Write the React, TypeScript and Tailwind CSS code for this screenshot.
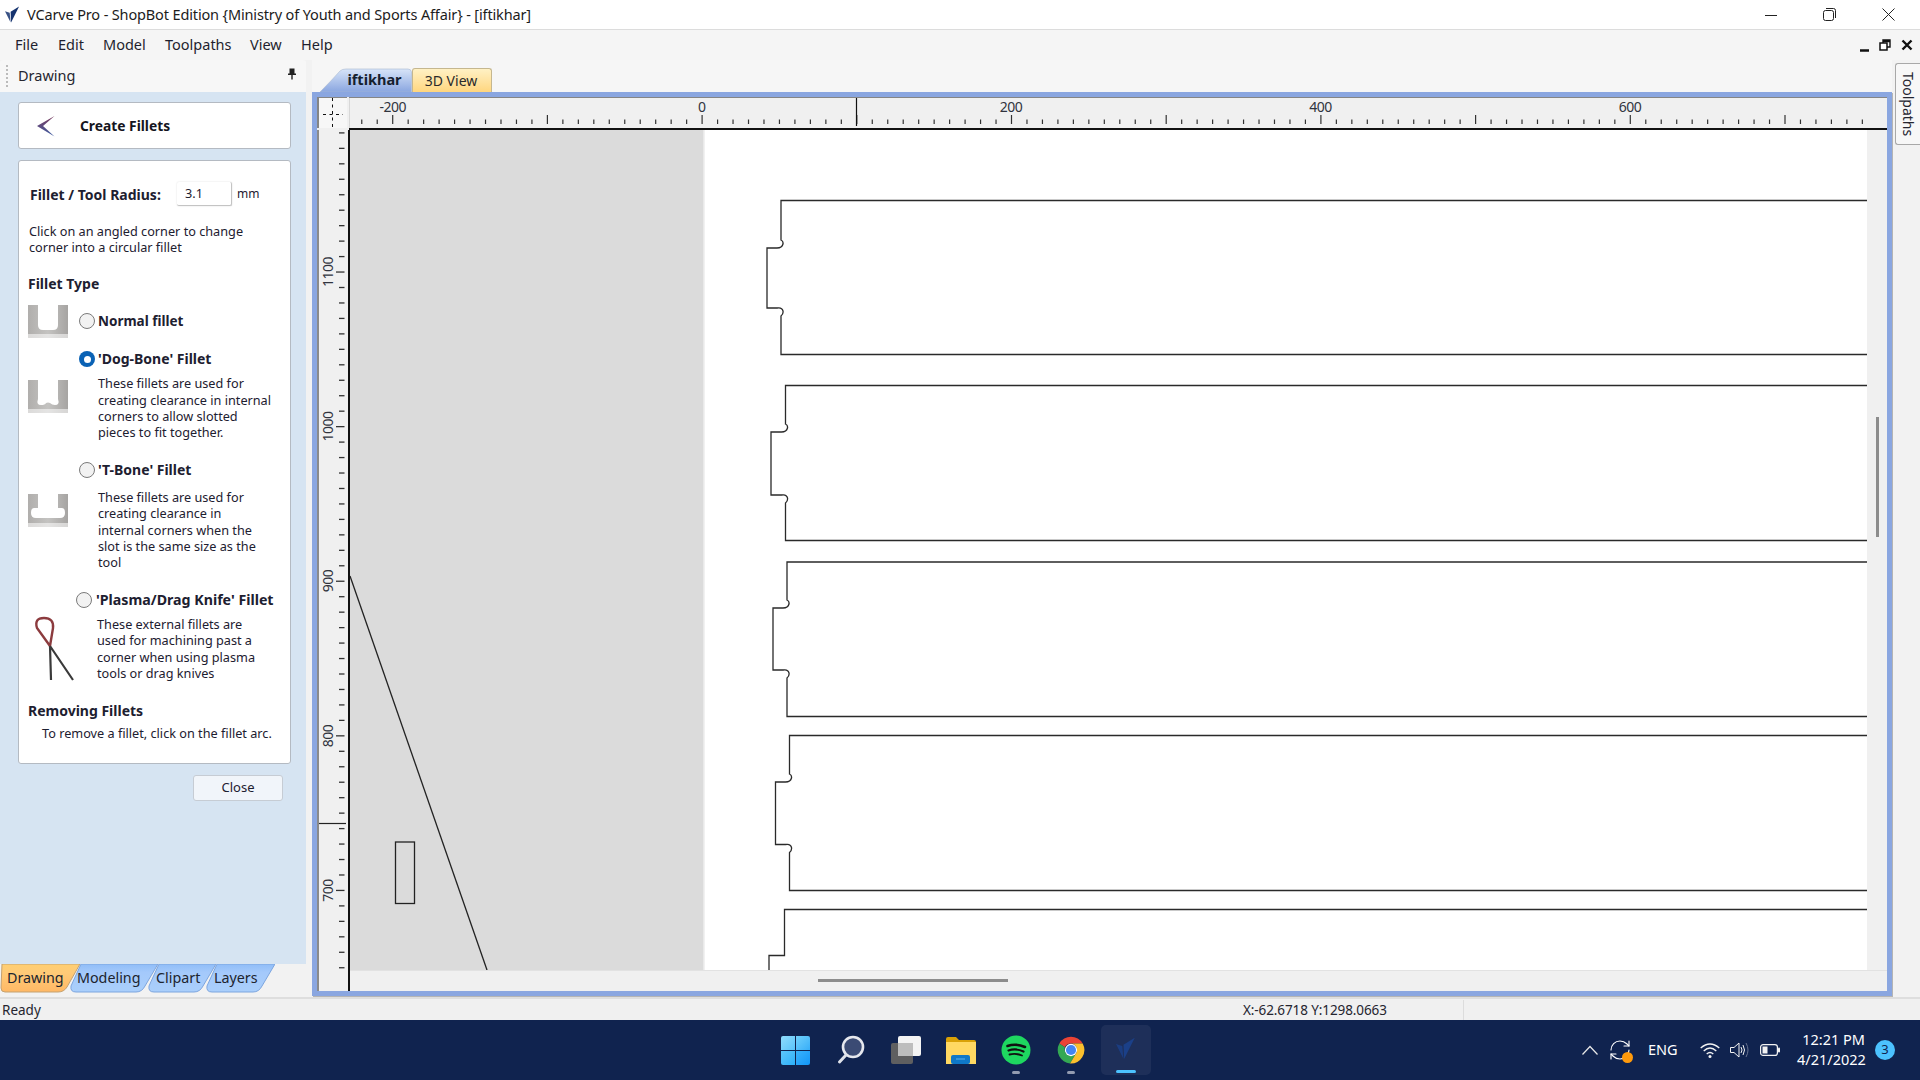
import { RefreshCw } from 'lucide-react'

const X_TICK = 15.47
const Y_TICK = 15.46

function Logo({ className, fill }: { className: string; fill: string }) {
  return (
    <svg viewBox="0 0 16 18" className={className}>
      <path d="M0 5 L5 6.5 L6 17 Z" fill={fill} opacity="0.85" />
      <path d="M6 5.5 L15 0 L6.5 17 Z" fill={fill} />
    </svg>
  )
}

function TitleBar() {
  return (
    <div className="flex h-[30px] items-center border-b border-[#dcdcdc] bg-white">
      <Logo className="ml-[5px] h-[18px] w-[15px]" fill="#15336f" />
      <span className="ml-[7px] text-[14.5px] tracking-[-0.14px] text-[#1c1c1c]">
        VCarve Pro - ShopBot Edition {'{'}Ministry of Youth and Sports Affair{'}'} - [iftikhar]
      </span>
      <div className="ml-auto flex items-center">
        <svg viewBox="0 0 12 12" className="h-3 w-3">
          <path d="M0 6.5 H12" stroke="#222" />
        </svg>
        <svg viewBox="0 0 13 13" className="ml-[46px] h-[13px] w-[13px]">
          <rect x="0.5" y="2.5" width="10" height="10" rx="2" fill="none" stroke="#222" />
          <path d="M3 0.5 H10.5 Q12.5 .5 12.5 2.5 V10" fill="none" stroke="#222" />
        </svg>
        <svg viewBox="0 0 13 13" className="mr-[25px] ml-[46px] h-[13px] w-[13px]">
          <path d="M0.5 0.5 L12.5 12.5 M12.5 0.5 L0.5 12.5" stroke="#222" />
        </svg>
      </div>
    </div>
  )
}

function MenuBar() {
  const items = [
    { name: 'File', width: 'w-[43px]' },
    { name: 'Edit', width: 'w-[45px]' },
    { name: 'Model', width: 'w-[62px]' },
    { name: 'Toolpaths', width: 'w-[85px]' },
    { name: 'View', width: 'w-[51px]' },
    { name: 'Help', width: 'w-[50px]' },
  ]
  return (
    <div className="flex h-[30px] items-center bg-[#f5f5f5] pl-[15px] text-[14.5px] text-[#1f1f2e]">
      {items.map((item) => (
        <span key={item.name} className={item.width}>
          {item.name}
        </span>
      ))}
      <div className="mr-[7px] ml-auto flex items-center">
        <svg viewBox="0 0 10 12" className="mt-[1px] h-3 w-[10px]">
          <path d="M0 10.5 H9" stroke="#111" strokeWidth="2.5" />
        </svg>
        <svg viewBox="0 0 12 12" className="ml-[9px] h-3 w-3">
          <rect x="1" y="4" width="7" height="7" fill="white" stroke="#111" strokeWidth="1.5" />
          <path d="M4 4 V1 H11 V8 H8 M4 2.5 H11" fill="none" stroke="#111" strokeWidth="1.4" />
        </svg>
        <svg viewBox="0 0 12 12" className="ml-[10px] h-3 w-3">
          <path d="M1.5 1.5 L10.5 10.5 M10.5 1.5 L1.5 10.5" stroke="#111" strokeWidth="2.4" />
        </svg>
      </div>
    </div>
  )
}

function Slot({ kind, id }: { kind: 'normal' | 'dog' | 't'; id: string }) {
  const slot = {
    normal: 'M10 0 V20 Q10 25 15 25 H25 Q30 25 30 20 V0 Z',
    dog: 'M10 0 V19 Q8 25 13 25 Q17 25 18 23 Q20 22 22 23 Q24 25 27 25 Q32 25 30 19 V0 Z',
    t: 'M10 0 V14 H6 Q3 14 3 19 Q3 24 8 24 H32 Q37 24 37 19 Q37 14 34 14 H30 V0 Z',
  }[kind]
  return (
    <svg viewBox="0 0 40 33" className="h-[33px] w-[40px] shrink-0">
      <defs>
        <linearGradient id={id} x1="0" x2="1" y1="0" y2="0">
          <stop offset="0" stopColor="#b0aeac" />
          <stop offset="0.5" stopColor="#c4c3c1" />
          <stop offset="1" stopColor="#a6a4a2" />
        </linearGradient>
      </defs>
      <rect width="40" height="33" fill={`url(#${id})`} />
      <path d={slot} fill="#fff" />
      <rect y="29" width="40" height="4" fill="#fff" opacity="0.55" />
    </svg>
  )
}

function Radio({ checked = false }: { checked?: boolean }) {
  return checked ? (
    <span className="flex h-4 w-4 shrink-0 items-center justify-center rounded-full bg-[#0a62b5]">
      <span className="h-[7px] w-[7px] rounded-full bg-white" />
    </span>
  ) : (
    <span className="block h-4 w-4 shrink-0 rounded-full border border-[#7a7a7a] bg-[#f2f2f2]" />
  )
}

function KnifeIcon() {
  return (
    <svg viewBox="30 612 50 72" className="h-[72px] w-[50px] shrink-0">
      <path d="M50 645 L37 627 Q34 617 44 617 Q54 617 53 627 L50 645" fill="none" stroke="#8c3b3e" strokeWidth="2.4" />
      <path d="M50 645 L51 679 M50 645 L73 679" stroke="#3a3a3a" strokeWidth="2.2" />
    </svg>
  )
}

function DrawingPanel() {
  return (
    <div className="flex flex-1 flex-col bg-[#d6e4f2] pt-[10px] pr-[15px] pl-[18px]">
      <div className="flex h-[47px] items-center rounded-[3px] border border-[#b4bac2] bg-white">
        <svg viewBox="0 0 20 22" className="ml-[17px] h-[22px] w-[20px]">
          <defs>
            <linearGradient id="chev" x1="0" x2="0" y1="0" y2="1">
              <stop offset="0" stopColor="#7c3a5c" />
              <stop offset="1" stopColor="#3c5da4" />
            </linearGradient>
          </defs>
          <path d="M18.5 1 L1 11 L18.5 21.5 L7 11 Z" fill="url(#chev)" />
        </svg>
        <span className="mt-[1px] ml-[24px] text-[13.8px] font-bold text-[#141420]">Create Fillets</span>
      </div>

      <div className="mt-[11px] flex h-[604px] flex-col rounded-[3px] border border-[#b4bac2] bg-white text-[12.7px] leading-[16.33px] text-[#1d2030]">
        <div className="mt-[21px] flex h-6 items-center pl-[11px]">
          <span className="mt-[2px] w-[147px] text-[14px] font-bold">Fillet / Tool Radius:</span>
          <span className="flex h-6 w-[55px] items-center rounded-[2px] border-r border-b border-[#c4c4c4] bg-white pl-2 shadow-[0_0_2px_#ddd]">
            3.1
          </span>
          <span className="ml-[5px] text-[12px]">mm</span>
        </div>
        <p className="mt-[17px] pl-[10px]">
          Click on an angled corner to change
          <br />
          corner into a circular fillet
        </p>

        <h3 className="mt-[20px] pl-[9px] text-[14px] font-bold">Fillet Type</h3>

        <div className="mt-[13px] flex items-center pl-[9px]">
          <Slot kind="normal" id="slot-a" />
          <span className="ml-[11px]"><Radio /></span>
          <span className="ml-[3px] text-[13.5px] font-bold">Normal fillet</span>
        </div>

        <div className="mt-[13px] flex items-center pl-[60px]">
          <Radio checked />
          <span className="ml-[3px] text-[14px] font-bold">'Dog-Bone' Fillet</span>
        </div>
        <div className="mt-[8px] flex pl-[9px]">
          <div className="mt-[5px]"><Slot kind="dog" id="slot-b" /></div>
          <p className="ml-[30px]">
            These fillets are used for
            <br />
            creating clearance in internal
            <br />
            corners to allow slotted
            <br />
            pieces to fit together.
          </p>
        </div>

        <div className="mt-[21px] flex items-center pl-[60px]">
          <Radio />
          <span className="ml-[3px] text-[14px] font-bold">'T-Bone' Fillet</span>
        </div>
        <div className="mt-[11px] flex pl-[9px]">
          <div className="mt-[5px]"><Slot kind="t" id="slot-c" /></div>
          <p className="ml-[30px]">
            These fillets are used for
            <br />
            creating clearance in
            <br />
            internal corners when the
            <br />
            slot is the same size as the
            <br />
            tool
          </p>
        </div>

        <div className="mt-[21px] flex items-center pl-[57px]">
          <Radio />
          <span className="ml-[4px] text-[14.2px] font-bold">'Plasma/Drag Knife' Fillet</span>
        </div>
        <div className="mt-[5px] flex pl-[11px]">
          <KnifeIcon />
          <p className="ml-[17px] pt-[3px]">
            These external fillets are
            <br />
            used for machining past a
            <br />
            corner when using plasma
            <br />
            tools or drag knives
          </p>
        </div>

        <h3 className="mt-[18px] pl-[9px] text-[14px] font-bold">Removing Fillets</h3>
        <p className="mt-[6px] pl-[23px]">To remove a fillet, click on the fillet arc.</p>
      </div>

      <button className="mt-[11px] mr-[8px] ml-auto h-[26px] w-[90px] rounded-[3px] border border-[#c6ccd4] bg-[#f1f5fa] text-[13px] text-[#1d2030]">
        Close
      </button>
    </div>
  )
}

function BottomTab({ name, width, active, className }: { name: string; width: number; active?: boolean; className: string }) {
  const d = active
    ? `M2 0 H${width} L${width - 13} 23 Q${width - 16} 28 ${width - 22} 28 H5 Q1 28 1 24 Z`
    : `M11 0 H${width} L${width - 13} 22 Q${width - 16} 28 ${width - 22} 28 H6 Q0 28 1 22 Z`
  return (
    <div className={`relative flex h-[29px] items-center pb-[2px] text-[14.3px] text-[#20242e] ${className}`}>
      <svg viewBox={`0 0 ${width} 29`} className="absolute inset-0 h-[29px]" width={width}>
        <defs>
          <linearGradient id={`tab-${name}`} x1="0" x2="0" y1="0" y2="1">
            <stop offset="0" stopColor={active ? '#ffcf72' : '#90bdf8'} />
            <stop offset="0.3" stopColor={active ? '#ffcb78' : '#a4c9fb'} />
            <stop offset="1" stopColor={active ? '#ffb865' : '#aacffb'} />
          </linearGradient>
        </defs>
        <path d={d} fill={`url(#tab-${name})`} stroke={active ? '#c4a170' : '#7da5de'} />
      </svg>
      <span className="relative">{name}</span>
    </div>
  )
}

function LeftColumn() {
  return (
    <div className="flex w-[306px] shrink-0 flex-col">
      <div className="flex h-[32px] items-center rounded-t-[3px] bg-[#f7f7f7] pl-[6px]">
        <span className="h-[22px] border-l-2 border-dotted border-[#bbb]" />
        <span className="ml-[10px] text-[14.5px] text-[#262630]">Drawing</span>
        <svg viewBox="0 0 10 12" className="mr-[9px] mb-[5px] ml-auto h-3 w-[10px]">
          <path d="M2.5 0.5 H7.5 V5.5 H9 V7 H5.7 V11.5 H4.3 V7 H1 V5.5 H2.5 Z" fill="#222" />
        </svg>
      </div>
      <DrawingPanel />
      <div className="flex h-[33px] bg-[#f2f2f2]">
        <BottomTab name="Drawing" width={80} active className="w-[80px] pl-[7px]" />
        <BottomTab name="Modeling" width={88} className="-ml-[10px] w-[88px] pl-[7px]" />
        <BottomTab name="Clipart" width={68} className="-ml-[10px] w-[68px] pl-[8px]" />
        <BottomTab name="Layers" width={69} className="-ml-[10px] w-[69px] pl-[8px]" />
      </div>
    </div>
  )
}

function DocTabs() {
  return (
    <div className="flex h-[32px] items-end bg-[#f6f6f6] pl-[8px]">
      <div className="relative flex h-[24px] w-[92px] items-center justify-center pl-[17px] text-[14.5px] font-bold text-[#15202e]">
        <svg viewBox="0 0 92 24" className="absolute inset-0 h-[24px] w-[92px]">
          <defs>
            <linearGradient id="doc-active" x1="0" x2="0" y1="0" y2="1">
              <stop offset="0" stopColor="#d7e4f8" />
              <stop offset="1" stopColor="#8aa6e0" />
            </linearGradient>
          </defs>
          <path d="M0 24 Q12 12 20 3 Q22 1 26 1 H88 Q91 1 91.5 4 V24 Z" fill="url(#doc-active)" stroke="#a8b8d0" strokeWidth="0.6" />
        </svg>
        <span className="relative">iftikhar</span>
      </div>
      <div className="flex h-[24px] w-[80px] items-center justify-center rounded-t-[3px] border border-b-0 border-[#c5b78f] bg-gradient-to-b from-[#fff1c4] to-[#ffd67e] pr-[2px] text-[14px] text-[#2a2a2a]">
        3D View
      </div>
    </div>
  )
}

function TopRuler() {
  const ticks = Array.from({ length: 99 }, (_, i) => 392.7 - 3 * X_TICK + i * X_TICK)
  const labels = [
    { text: '-200', x: 392.7 },
    { text: '0', x: 701.7 },
    { text: '200', x: 1011 },
    { text: '400', x: 1320.5 },
    { text: '600', x: 1630 },
  ]
  return (
    <svg viewBox="349 98 1538 30" className="h-[30px] w-full">
      {ticks.map((x, i) => {
        const major = (i - 3) % 10 === 0
        return (
          <line key={i} x1={x} x2={x} y1={major ? 115 : 119.5} y2={124} stroke="#333" strokeWidth="1.2" />
        )
      })}
      <line x1="856.5" x2="856.5" y1="98" y2="126" stroke="#111" strokeWidth="1.2" />
      {labels.map((l) => (
        <text key={l.text} x={l.x} y="112" textAnchor="middle" fontSize="14" fill="#30343e" letterSpacing="-0.5">
          {l.text}
        </text>
      ))}
    </svg>
  )
}

function LeftRuler() {
  const ticks = Array.from({ length: 55 }, (_, i) => 132.9 + i * Y_TICK)
  const labels = [
    { text: '1100', y: 272 },
    { text: '1000', y: 426.6 },
    { text: '900', y: 581 },
    { text: '800', y: 736 },
    { text: '700', y: 890.6 },
  ]
  return (
    <svg viewBox="319 130 29 861" className="h-[861px] w-[29px]">
      {ticks.map((y, i) => {
        const major = (i - 9) % 10 === 0
        return (
          <line key={i} x1={major ? 336 : 339} x2="344.5" y1={y} y2={y} stroke="#333" strokeWidth="1.3" />
        )
      })}
      <line x1="319" x2="346" y1="823.5" y2="823.5" stroke="#222" strokeWidth="1.2" />
      {labels.map((l) => (
        <text
          key={l.text}
          x="0"
          y="0"
          transform={`translate(333 ${l.y}) rotate(-90)`}
          textAnchor="middle"
          fontSize="14"
          fill="#30343e"
          letterSpacing="-0.5"
        >
          {l.text}
        </text>
      ))}
    </svg>
  )
}

// outline of one slotted part, dog-bone at both inner corners of the tab
function partPath(top: number, bottom: number, left: number, notchX: number, notchTop: number, notchBottom: number) {
  return [
    `M1867 ${top} H${left} V${notchTop - 8}`,
    `q2.5 1 2 4 q-1 4 -6 4 H${notchX} V${notchBottom} H${left - 4}`,
    `q5 -1 6 3 q.5 3 -2 5 V${bottom} H1867`,
  ].join(' ')
}

function CanvasDrawing() {
  const parts = [
    partPath(200.5, 354.5, 781, 767, 248, 308),
    partPath(385.5, 540.5, 785.5, 771, 432, 495),
    partPath(562, 716.5, 787, 773, 608, 670),
    partPath(735.5, 890.5, 789.5, 775.5, 782, 844.5),
  ]
  return (
    <svg viewBox="350 130 1517 840" className="h-[840px] w-[1517px]">
      <rect x="350" y="130" width="353.5" height="840" fill="#dbdbdb" />
      <line x1="704" x2="704" y1="130" y2="970" stroke="#e4e4e4" />
      <line x1="350" y1="576" x2="487" y2="970" stroke="#222" strokeWidth="1.3" />
      <rect x="395.5" y="842" width="19" height="61.5" fill="none" stroke="#222" strokeWidth="1.3" />
      {parts.map((d, i) => (
        <path key={i} d={d} fill="none" stroke="#2a2a2a" strokeWidth="1.3" />
      ))}
      <path d="M1867 909.5 H784.5 V955.5 H769 V970" fill="none" stroke="#2a2a2a" strokeWidth="1.3" />
    </svg>
  )
}

function ViewFrame() {
  return (
    <div className="flex h-[904px] w-[1580px] flex-col border-[5px] border-[#8aa6e0] bg-[#f0f0f0] shadow-[1px_1px_0_#b4b4b4]">
      <div className="flex h-[33px] shrink-0">
        <div className="h-[31px] w-[30px] border-t border-l-2 border-[#858585] bg-[#f7f7f7]">
          <svg viewBox="317 98 28 30" className="h-[30px] w-[28px]">
            <path d="M330.5 98 V128" stroke="#111" strokeDasharray="3 3.5" />
            <path d="M321 114.5 H341" stroke="#111" strokeDasharray="3 3.5" />
          </svg>
        </div>
        <div className="ml-[2px] h-[33px] flex-1 border-t border-b-2 border-t-[#858585] border-b-[#111] bg-[#f0f0f0] pb-0 shadow-[inset_1px_0_0_#d8d8d8]">
          <TopRuler />
        </div>
      </div>
      <div className="flex flex-1">
        <div className="w-[31px] shrink-0 border-l-2 border-[#8a8a8a] bg-[#f0f0f0]">
          <LeftRuler />
        </div>
        <div className="flex flex-1 flex-col border-l-2 border-[#111]">
          <div className="flex">
            <div className="h-[840px] w-[1517px] bg-white">
              <CanvasDrawing />
            </div>
            <div className="flex-1 pt-[287px] pl-[9px]">
              <div className="h-[120px] w-[3px] bg-[#8c8c8c]" />
            </div>
          </div>
          <div className="flex-1 border-t border-[#e2e2e2] pt-[8px] pl-[468px]">
            <div className="h-[3px] w-[190px] bg-[#8c8c8c]" />
          </div>
        </div>
      </div>
    </div>
  )
}

function StatusBar() {
  return (
    <div className="flex h-[23px] items-center border-t-2 border-[#dedede] bg-[#f0f0f0] pt-[1px] pl-[2px] text-[13.5px] text-[#25252f]">
      <span className="w-[1241px]">Ready</span>
      <span className="w-[220px] tracking-[-0.1px]">X:-62.6718 Y:1298.0663</span>
      <span className="h-[20px] border-l border-[#dcdcdc]" />
    </div>
  )
}

function ChromeIcon() {
  return (
    <svg viewBox="-15 -15 30 30" className="h-7 w-7">
      <path d="M-12.5 -7 A14.5 14.5 0 0 1 12.5 -7 H0 A7 7 0 0 0 -6.5 -3 Z" fill="#ea4335" />
      <path d="M-12.5 -7 A14.5 14.5 0 0 0 -1 14.4 L5.5 3.5 A7 7 0 0 1 -6.5 -3 Z" fill="#34a853" />
      <path d="M12.5 -7 A14.5 14.5 0 0 1 -1 14.4 L5.5 3.5 A7 7 0 0 0 0 -7 Z" fill="#fbc02d" />
      <circle r="6.6" fill="#fff" />
      <circle r="5.4" fill="#4285f4" />
    </svg>
  )
}

function Taskbar() {
  return (
    <div className="flex h-[60px] items-center bg-[#10234f] text-white">
      <div className="ml-[768px] flex h-full items-center">
        <div className="flex w-[55px] justify-center">
          <div className="grid h-[29px] w-[29px] grid-cols-2 gap-[1px]">
            <span className="rounded-tl-[2px] bg-gradient-to-br from-[#8fdcfc] to-[#58c3fa]" />
            <span className="rounded-tr-[2px] bg-gradient-to-br from-[#6fd0fb] to-[#35aef9]" />
            <span className="rounded-bl-[2px] bg-gradient-to-br from-[#5cc6fb] to-[#2ab0f9]" />
            <span className="rounded-br-[2px] bg-gradient-to-br from-[#38b2fb] to-[#0f96f7]" />
          </div>
        </div>
        <div className="flex w-[55px] justify-center">
          <svg viewBox="0 0 28 30" className="h-[30px] w-[28px]">
            <circle cx="16" cy="12" r="10" fill="#3b4b74" stroke="#e6e8ee" strokeWidth="2.6" />
            <path d="M9 20 L2.5 27" stroke="#dfe2ea" strokeWidth="3" strokeLinecap="round" />
          </svg>
        </div>
        <div className="flex w-[55px] justify-center">
          <svg viewBox="0 0 30 28" className="h-7 w-[30px]">
            <rect x="0" y="7" width="22" height="21" rx="2" fill="#5f5f60" />
            <rect x="7" y="0" width="23" height="20" rx="2" fill="#f3f3f3" />
            <rect x="7" y="7" width="15" height="13" fill="#bdbdbd" />
          </svg>
        </div>
        <div className="flex w-[55px] justify-center">
          <svg viewBox="0 0 30 27" className="h-[27px] w-[30px]">
            <path d="M0 2 Q0 0 2 0 H10 L13 3 H28 Q30 3 30 5 V8 H0 Z" fill="#d9a107" />
            <path d="M0 5 H30 V27 H0 Z" fill="#ffd862" />
            <rect x="5" y="18" width="19" height="9" rx="2" fill="#0f78c8" />
            <path d="M10 22 H19" stroke="#5cb3ee" />
          </svg>
        </div>
        <div className="relative flex w-[55px] justify-center">
          <svg viewBox="0 0 30 30" className="h-[30px] w-[30px]">
            <circle cx="15" cy="15" r="14.5" fill="#1ed760" />
            <path d="M6.5 11 Q15 8 24 12" fill="none" stroke="#111" strokeWidth="2.6" strokeLinecap="round" />
            <path d="M7.5 15.5 Q15 13 22.5 16.5" fill="none" stroke="#111" strokeWidth="2.2" strokeLinecap="round" />
            <path d="M8.5 19.5 Q15 18 21 20.5" fill="none" stroke="#111" strokeWidth="1.8" strokeLinecap="round" />
          </svg>
          <span className="absolute top-[36px] left-[24px] h-[3px] w-[8px] rounded-full bg-[#939bb0]" />
        </div>
        <div className="relative flex w-[55px] justify-center">
          <ChromeIcon />
          <span className="absolute top-[35px] left-[24px] h-[3px] w-[8px] rounded-full bg-[#939bb0]" />
        </div>
        <div className="relative ml-[3px] flex h-[50px] w-[50px] items-center justify-center rounded-[5px] bg-white/[0.06]">
          <Logo className="mb-[3px] h-[26px] w-[20px]" fill="#1b4088" />
          <span className="absolute bottom-[2px] left-[15px] h-[3px] w-[20px] rounded-full bg-[#4cc2ff]" />
        </div>
      </div>

      <div className="ml-[431px] flex items-center">
        <svg viewBox="0 0 16 10" className="h-[10px] w-4">
          <path d="M0.5 9.5 L8 1.5 L15.5 9.5" fill="none" stroke="#e8e8e8" strokeWidth="1.2" />
        </svg>
        <div className="relative ml-[10px] h-6 w-6">
          <RefreshCw className="h-6 w-6 text-white" strokeWidth={1.1} />
          <span className="absolute right-[-1px] bottom-[-1px] h-[11px] w-[11px] rounded-full bg-[#ff9a0c]" />
        </div>
        <span className="ml-[16px] w-[52px] text-[14.5px]">ENG</span>
        <svg viewBox="0 0 20 15" className="h-[15px] w-5">
          <path d="M0.7 5 Q10 -3 19.3 5 M3.7 8 Q10 2 16.3 8 M6.7 11 Q10 8 13.3 11" fill="none" stroke="#f2f2f2" strokeWidth="1.3" />
          <circle cx="10" cy="13.5" r="1.5" fill="#f2f2f2" />
        </svg>
        <svg viewBox="0 0 20 16" className="ml-[10px] h-4 w-5">
          <path d="M0.5 5.5 H4 L9 1 V15 L4 10.5 H0.5 Z" fill="none" stroke="#f2f2f2" />
          <path d="M11 5 Q13 8 11 11 M13 3 Q16 8 13 13" fill="none" stroke="#f2f2f2" />
          <path d="M16 1 Q20 8 16 15" fill="none" stroke="#67728f" />
        </svg>
        <svg viewBox="0 0 20 12" className="ml-[10px] h-3 w-5">
          <rect x="0.6" y="0.6" width="16.8" height="10.8" rx="2.5" fill="none" stroke="#f2f2f2" strokeWidth="1.2" />
          <rect x="2.5" y="2.5" width="5" height="7" fill="#f2f2f2" />
          <rect x="18" y="3.5" width="2" height="5" rx="1" fill="#f2f2f2" />
        </svg>
        <div className="mb-[2px] ml-[17px] w-[68px] text-right text-[14.5px] leading-[20px] whitespace-nowrap">
          <div>12:21 PM</div>
          <div>4/21/2022</div>
        </div>
        <span className="ml-[10px] flex h-5 w-5 items-center justify-center rounded-full bg-[#4cc2ff] text-[13px] text-[#10234f]">
          3
        </span>
      </div>
    </div>
  )
}

export default function App() {
  return (
    <div className="flex h-[1080px] w-[1920px] flex-col overflow-hidden bg-[#f2f2f2] font-['Noto_Sans',sans-serif]">
      <TitleBar />
      <MenuBar />
      <div className="flex h-[937px]">
        <LeftColumn />
        <div className="ml-[6px] flex w-[1580px] flex-col">
          <DocTabs />
          <ViewFrame />
        </div>
        <div className="flex-1 pt-[3px] pl-[3px]">
          <div className="flex h-[82px] w-[25px] items-center justify-center rounded-tl-[3px] rounded-bl-[3px] border border-r-0 border-[#a8a8a8] bg-[#f7f7f7]">
            <span className="text-[14px] text-[#25252f] [writing-mode:vertical-rl]">Toolpaths</span>
          </div>
        </div>
      </div>
      <StatusBar />
      <Taskbar />
    </div>
  )
}
